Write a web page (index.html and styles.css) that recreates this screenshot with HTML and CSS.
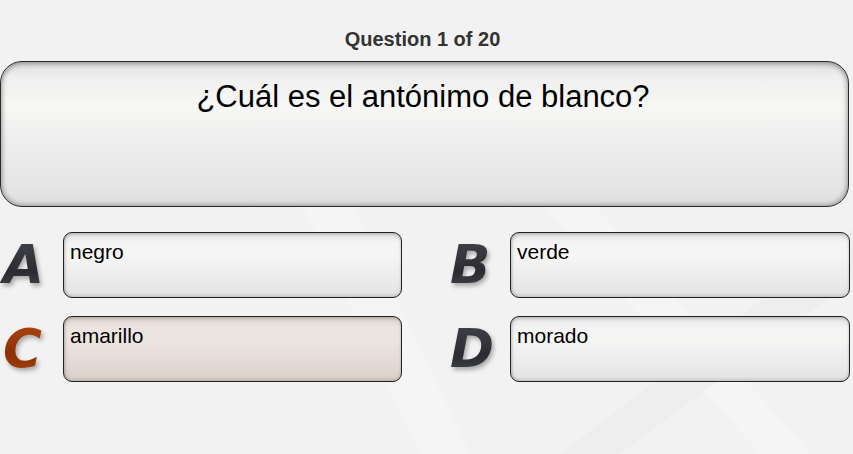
FILE: index.html
```html
<!DOCTYPE html>
<html lang="es">
<head>
    <meta charset="UTF-8">
    <meta name="viewport" content="width=device-width, initial-scale=1.0">
    <title>Quiz</title>
    <link rel="stylesheet" href="styles.css">
</head>
<body>
    <svg class="fondo" width="853" height="454" viewBox="0 0 853 454">
        <path d="M300 200 L420 454 L470 454 L350 200 Z" fill="#f5f5f5"/>
        <path d="M540 200 L760 454 L810 454 L590 200 Z" fill="#f5f5f5"/>
        <path d="M853 230 L560 454 L620 454 L853 280 Z" fill="#eeeeee"/>
    </svg>

    <div class="quiz">
        <h2 class="contador">Question 1 of 20</h2>

        <div class="pregunta">¿Cuál es el antónimo de blanco?</div>

        <div class="respuestas">
            <div class="opcion">
                <span class="letra">A</span>
                <div class="caja">negro</div>
            </div>
            <div class="opcion">
                <span class="letra">B</span>
                <div class="caja">verde</div>
            </div>
            <div class="opcion">
                <span class="letra letra-activa">C</span>
                <div class="caja caja-activa">amarillo</div>
            </div>
            <div class="opcion">
                <span class="letra">D</span>
                <div class="caja">morado</div>
            </div>
        </div>
    </div>
</body>
</html>
```

FILE: styles.css
```css
body {
    font-family: "Liberation Sans", Arial, sans-serif;
    background-color: #f2f2f2;
    margin: 0;
    padding: 0;
    overflow: hidden;
}

.fondo {
    position: absolute;
    top: 0;
    left: 0;
    z-index: 0;
}

.quiz {
    position: relative;
    z-index: 1;
    width: 853px;
}

.contador {
    text-align: center;
    font-size: 20px;
    font-weight: bold;
    color: #333;
    margin: 0;
    padding-top: 28px;
    padding-right: 8px;
    height: 33px;
    line-height: 23px;
}

.pregunta {
    width: 849px;
    height: 146px;
    box-sizing: border-box;
    border: 1px solid #2a2a2a;
    border-radius: 22px;
    background: linear-gradient(#dcdcdc 0%, #efefef 10%, #f7f7f5 30%, #eeeeee 55%, #e6e6e6 85%, #dedede 100%);
    box-shadow: inset 0 3px 4px rgba(0, 0, 0, 0.18), inset 0 -3px 4px rgba(0, 0, 0, 0.12), inset 3px 0 4px rgba(0, 0, 0, 0.12), inset -3px 0 4px rgba(0, 0, 0, 0.12);
    text-align: center;
    font-size: 31px;
    line-height: 36px;
    color: #000;
    padding-top: 17px;
    padding-right: 3px;
}

.respuestas {
    display: grid;
    grid-template-columns: 402px 403px;
    column-gap: 45px;
    row-gap: 18px;
    margin-top: 25px;
}

.opcion {
    display: flex;
    align-items: flex-start;
}

.letra {
    width: 63px;
    flex-shrink: 0;
    font-family: "DejaVu Sans", sans-serif;
    font-weight: bold;
    font-style: italic;
    font-size: 53px;
    line-height: 66px;
    padding-left: 3px;
    box-sizing: border-box;
    background: linear-gradient(#45474e, #2a2c31 60%, #4b4e55);
    -webkit-background-clip: text;
    background-clip: text;
    color: transparent;
    filter: drop-shadow(2px 3px 2px rgba(0, 0, 0, 0.3));
}

.letra-activa {
    background: linear-gradient(#b3480f, #8e2e06 60%, #b0500f);
    -webkit-background-clip: text;
    background-clip: text;
}

.caja {
    flex: 1;
    height: 66px;
    box-sizing: border-box;
    border: 1px solid #222;
    border-radius: 9px;
    background: linear-gradient(#e4e4e4 0%, #f3f3f3 15%, #f6f6f5 35%, #ececec 70%, #e2e2e2 100%);
    box-shadow: inset 0 2px 3px rgba(0, 0, 0, 0.15), inset 0 -2px 3px rgba(0, 0, 0, 0.1), inset 2px 0 3px rgba(0, 0, 0, 0.1);
    font-size: 21px;
    color: #000;
    padding: 7px 6px;
    line-height: 24px;
}

.caja-activa {
    background: linear-gradient(#ddd2cd 0%, #ebe3df 15%, #ede5e1 35%, #e4dbd6 70%, #dad0ca 100%);
}
```
